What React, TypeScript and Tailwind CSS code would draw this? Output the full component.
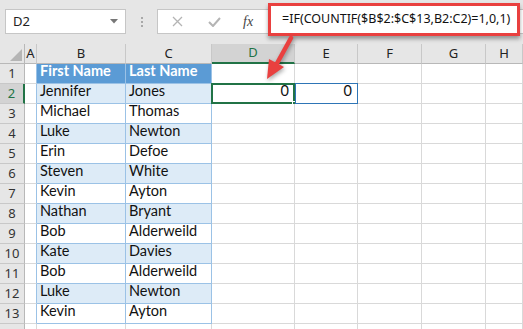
import React from 'react';

const COLS = ['A', 'B', 'C', 'D', 'E', 'F', 'G', 'H'];
const WIDTHS = ['w-[12px]', 'w-[89px]', 'w-[86px]', 'w-[83px]', 'w-[63px]', 'w-[64px]', 'w-[64px]', 'flex-1'];

const PEOPLE: [string, string][] = [
  ['First Name', 'Last Name'],
  ['Jennifer', 'Jones'],
  ['Michael', 'Thomas'],
  ['Luke', 'Newton'],
  ['Erin', 'Defoe'],
  ['Steven', 'White'],
  ['Kevin', 'Ayton'],
  ['Nathan', 'Bryant'],
  ['Bob', 'Alderweild'],
  ['Kate', 'Davies'],
  ['Bob', 'Alderweild'],
  ['Luke', 'Newton'],
  ['Kevin', 'Ayton'],
];

const cellFont = { fontFamily: 'Lato, "Liberation Sans", sans-serif' };
const uiFont = { fontFamily: '"Noto Sans", "Open Sans", sans-serif' };

function FormulaBar() {
  return (
    <div className="relative h-[44px] bg-[#e6e6e6] flex items-start pt-[9px]">
      <div className="ml-[5px] w-[121px] h-[25px] bg-white border border-[#c6c6c6] flex items-center justify-between pl-[7px] pr-[7px]">
        <span className="text-[13px] text-[#222]" style={uiFont}>D2</span>
        <svg width="8" height="5" viewBox="0 0 8 5"><path d="M0 0h8L4 4.5z" fill="#777" /></svg>
      </div>
      <div className="w-[31px] h-[25px] flex flex-col items-center justify-center gap-[2px]">
        <span className="w-[2px] h-[2px] bg-[#a8a8a8]" />
        <span className="w-[2px] h-[2px] bg-[#a8a8a8]" />
        <span className="w-[2px] h-[2px] bg-[#a8a8a8]" />
      </div>
      <div className="flex-1 h-[25px] bg-white border border-[#c6c6c6] border-r-0 flex items-center">
        <svg className="ml-[14px]" width="11" height="11" viewBox="0 0 11 11">
          <path d="M1 1l9 9M10 1l-9 9" stroke="#b4b4b4" strokeWidth="1.3" />
        </svg>
        <svg className="ml-[25px]" width="13" height="10" viewBox="0 0 13 10">
          <path d="M1 5l4 4 7-8" stroke="#b4b4b4" strokeWidth="2" fill="none" />
        </svg>
        <span
          className="ml-[22px] text-[14px] italic text-[#444]"
          style={{ fontFamily: '"Liberation Serif", serif' }}
        >
          fx
        </span>
      </div>
      <div className="absolute left-[268px] top-[3px] w-[252px] h-[33px] border-[3px] border-[#e9403f] bg-white flex items-center pl-[11px] shadow-[0_3px_4px_rgba(0,0,0,0.35)]">
        <span className="text-[12.5px] text-[#111] whitespace-nowrap" style={uiFont}>
          =IF(COUNTIF($B$2:$C$13,B2:C2)=1,0,1)
        </span>
      </div>
    </div>
  );
}

function ColumnHeaders() {
  return (
    <div className="flex h-[20px]">
      <div className="w-[25px] bg-[#e6e6e6] border-r border-b border-[#b8b8b8] flex items-end justify-end p-[2px]">
        <svg width="12" height="12" viewBox="0 0 12 12"><path d="M12 0V12H0z" fill="#b5b5b5" /></svg>
      </div>
      {COLS.map((c, i) => (
        <div
          key={c}
          className={`${WIDTHS[i]} flex items-center justify-center text-[13px] border-r border-[#c8c8c8] ${
            c === 'D'
              ? 'bg-[#d3d3d3] text-[#217346] border-b-2 border-b-[#217346]'
              : 'bg-[#e6e6e6] text-[#222] border-b border-b-[#b8b8b8]'
          }`}
          style={uiFont}
        >
          {c}
        </div>
      ))}
    </div>
  );
}

function Row({ n }: { n: number }) {
  const person = PEOPLE[n - 1];
  const inTable = !!person;
  const header = n === 1;
  const band = inTable && !header && n % 2 === 0;
  const selected = n === 2;

  return (
    <div className="flex h-[20px]">
      <div
        className={`w-[25px] flex items-center justify-center text-[13px] border-b border-[#c8c8c8] ${
          selected
            ? 'bg-[#d3d3d3] text-[#217346] border-r-2 border-r-[#217346]'
            : 'bg-[#e6e6e6] text-[#333] border-r border-r-[#b8b8b8]'
        }`}
        style={uiFont}
      >
        {n <= 13 ? n : ''}
      </div>
      {COLS.map((c, i) => {
        const isTableCol = inTable && (c === 'B' || c === 'C');
        let cls = `${WIDTHS[i]} relative flex items-end pb-[1px] text-[14.5px] whitespace-nowrap `;
        if (isTableCol) {
          cls += header
            ? 'bg-[#5b9bd5] text-white font-bold border-r border-b border-[#9bc2e6] pl-[3px]'
            : `${band ? 'bg-[#ddebf7]' : 'bg-white'} text-[#111] border-r border-b border-[#9bc2e6] pl-[3px]`;
        } else if (c === 'A' && inTable) {
          cls += 'bg-white border-b border-[#d9d9d9] border-r border-r-[#9bc2e6]';
        } else {
          cls += 'bg-white border-r border-b border-[#d9d9d9]';
        }
        let text = '';
        if (c === 'B' && person) text = person[0];
        if (c === 'C' && person) text = person[1];
        return (
          <div key={c} className={cls} style={cellFont}>
            {text}
            {selected && c === 'D' && (
              <>
                <div className="absolute -left-[1px] -top-[1px] right-[-1px] bottom-[-1px] border-2 border-[#217346]" />
                <span className="absolute right-[5px] bottom-[1px] text-[#111]">0</span>
                <div className="absolute right-[-4px] bottom-[-4px] w-[6px] h-[6px] bg-[#217346] border border-white" />
              </>
            )}
            {selected && c === 'E' && (
              <>
                <div className="absolute left-0 -top-[1px] right-[-1px] bottom-[-1px] border border-[#2e75b6]" />
                <span className="absolute right-[5px] bottom-[1px] text-[#111]">0</span>
              </>
            )}
          </div>
        );
      })}
    </div>
  );
}

export default function App() {
  return (
    <div className="relative w-[523px] h-[329px] overflow-hidden bg-white select-none">
      <FormulaBar />
      <ColumnHeaders />
      {Array.from({ length: 14 }, (_, i) => (
        <Row key={i} n={i + 1} />
      ))}
      <svg
        className="absolute left-[255px] top-[34px]"
        width="50"
        height="54"
        viewBox="0 0 50 54"
        style={{ filter: 'drop-shadow(1px 2px 2px rgba(0,0,0,0.35))' }}
      >
        <path d="M36 4L20 33" stroke="#e9403f" strokeWidth="4.5" strokeLinecap="round" />
        <path d="M12 45L14 25L29 33z" fill="#e9403f" />
      </svg>
    </div>
  );
}
